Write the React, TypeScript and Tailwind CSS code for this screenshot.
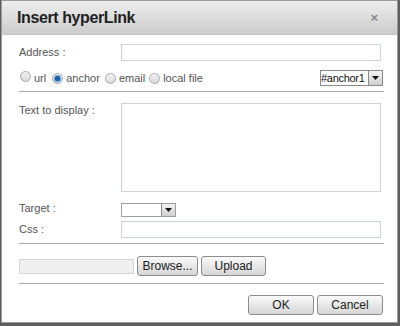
import React from "react";

const font = { fontFamily: '"Liberation Sans", Arial, sans-serif' };

function Radio({ checked }: { checked?: boolean }) {
  return (
    <span className="inline-flex w-[11px] h-[11px] rounded-full border border-[#a8a8a8] bg-gradient-to-b from-[#f4f4f4] to-[#d8d8d8] items-center justify-center shrink-0">
      {checked && <span className="w-[5px] h-[5px] rounded-full bg-[#1b5fa8] ring-1 ring-[#5aa0e0]" />}
    </span>
  );
}

function Arrow() {
  return (
    <span className="w-[14px] h-full border-l border-[#8a8a8a] bg-gradient-to-b from-[#f2f2f2] to-[#d0d0d0] flex items-center justify-center shrink-0">
      <svg width="7" height="4" viewBox="0 0 7 4"><path d="M0 0h7L3.5 4z" fill="#111" /></svg>
    </span>
  );
}

function Btn({ children, w }: { children: React.ReactNode; w: string }) {
  return (
    <button className={`${w} h-[20px] rounded-[3px] border border-[#8c8c8c] bg-gradient-to-b from-[#fafafa] to-[#d6d6d6] text-[12px] text-[#222] flex items-center justify-center`}>
      {children}
    </button>
  );
}

export default function App() {
  return (
    <div className="w-[400px] h-[326px] bg-[#5e5e5e] pl-[1px] overflow-hidden" style={font}>
      <div className="w-[397px] h-[323px] bg-white border border-[#9a9a9a] flex flex-col">
        <div className="h-[34px] shrink-0 bg-gradient-to-b from-[#eeeeee] to-[#cccccc] border-b border-[#c4c4c4] flex items-center justify-between pl-[15px] pr-[19px]">
          <span className="text-[16px] font-bold text-[#222] tracking-[-0.4px]">Insert hyperLink</span>
          <span className="text-[13px] font-bold text-[#8a8a8a] leading-none">×</span>
        </div>

        <div className="flex flex-col pl-[17px] pr-[13px] text-[11px] text-[#555]">
          <div className="flex items-center mt-[9px] h-[17px]">
            <span className="w-[102px]">Address :</span>
            <input className="flex-1 h-[17px] mr-[3px] border border-[#cdd3da] outline-none" />
          </div>

          <div className="flex items-center mt-[9px] h-[16px]">
            <span className="ml-[1px]"><Radio /></span>
            <span className="ml-[3px] mr-[6px]">url</span>
            <Radio checked />
            <span className="ml-[3px] mr-[5px]">anchor</span>
            <Radio />
            <span className="ml-[3px] mr-[4px]">email</span>
            <Radio />
            <span className="ml-[3px]">local file</span>
            <div className="ml-auto mr-[1px] h-[16px] w-[63px] border border-[#8a8a8a] flex text-[#111]">
              <span className="flex-1 leading-[14px] overflow-hidden whitespace-nowrap tracking-[-0.3px]">#anchor1</span>
              <Arrow />
            </div>
          </div>

          <div className="mt-[5px] border-t border-[#a8a8a8]" />

          <div className="flex mt-[11px]">
            <span className="w-[102px] leading-[14px]">Text to display :</span>
            <textarea className="flex-1 h-[89px] mr-[3px] border border-[#cdd3da] outline-none resize-none" />
          </div>

          <div className="flex items-start mt-[11px]">
            <span className="w-[102px] leading-[12px] -mt-[1px]">Target :</span>
            <div className="h-[14px] w-[55px] border border-[#a0a0a0] flex justify-end">
              <Arrow />
            </div>
          </div>

          <div className="flex items-center mt-[4px] h-[17px]">
            <span className="w-[102px]">Css :</span>
            <input className="flex-1 h-[17px] mr-[3px] border border-[#cdd3da] outline-none" />
          </div>

          <div className="mt-[5px] border-t border-[#a8a8a8]" />

          <div className="flex items-center mt-[12px] h-[20px]">
            <span className="w-[115px] h-[15px] bg-[#efefef] border border-[#d4d4d4]" />
            <span className="ml-[3px]"><Btn w="w-[61px]">Browse...</Btn></span>
            <span className="ml-[3px]"><Btn w="w-[65px]">Upload</Btn></span>
          </div>

          <div className="mt-[7px] border-t border-[#a8a8a8]" />

          <div className="flex justify-end mt-[11px] gap-[3px] mr-[1px]">
            <Btn w="w-[66px]">OK</Btn>
            <Btn w="w-[66px]">Cancel</Btn>
          </div>
        </div>
      </div>
    </div>
  );
}
